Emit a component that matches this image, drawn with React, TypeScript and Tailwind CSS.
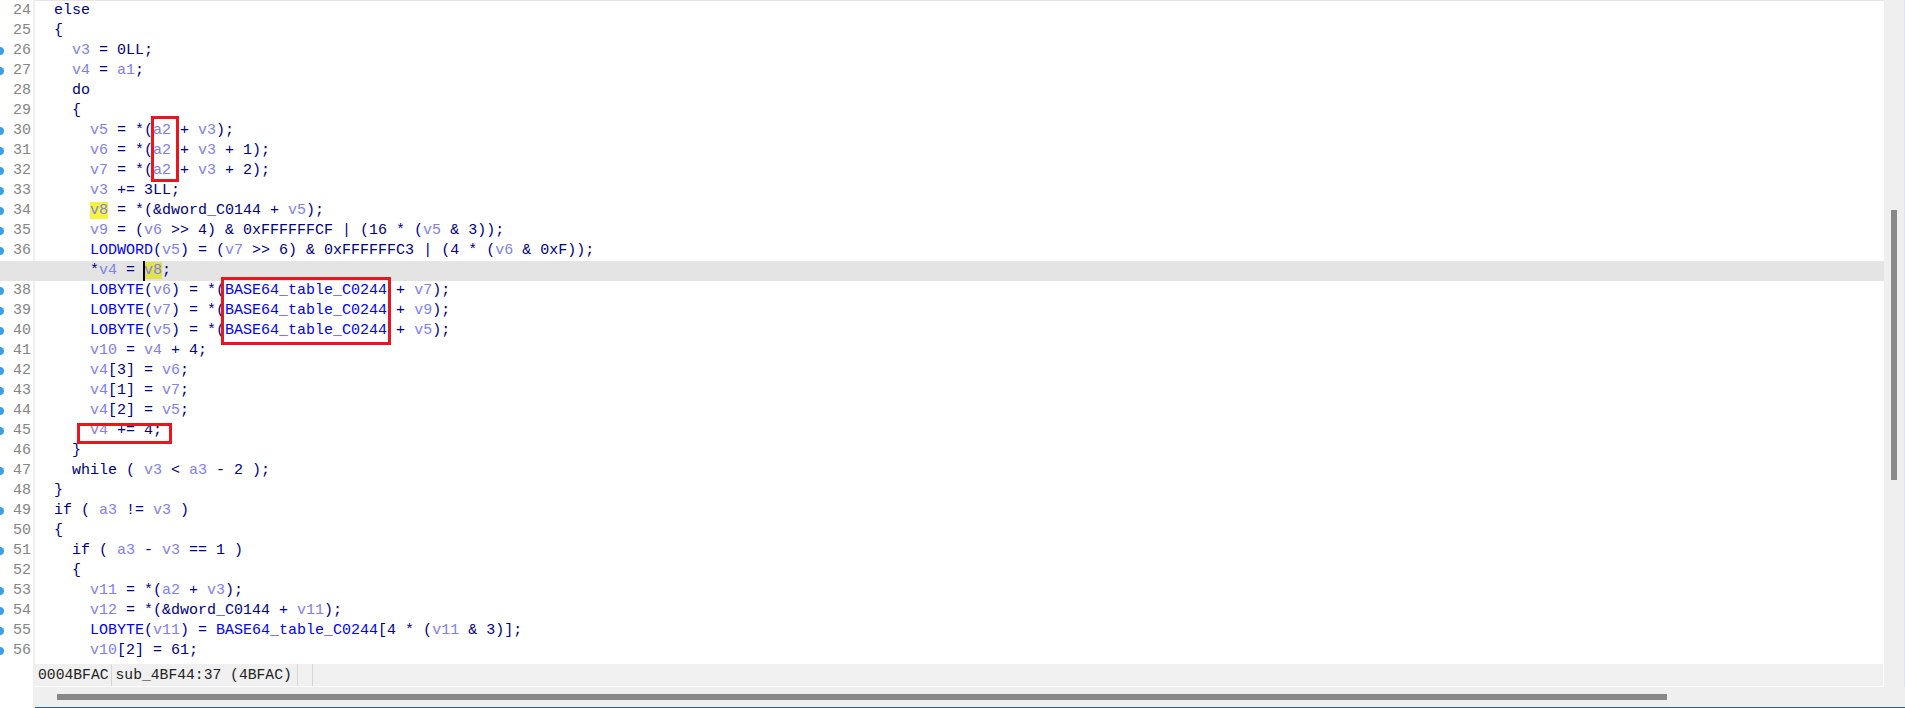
import React from "react";

const CODE: string[] = [
  "  else",
  "  {",
  "    v3 = 0LL;",
  "    v4 = a1;",
  "    do",
  "    {",
  "      v5 = *(a2 + v3);",
  "      v6 = *(a2 + v3 + 1);",
  "      v7 = *(a2 + v3 + 2);",
  "      v3 += 3LL;",
  "      v8 = *(&dword_C0144 + v5);",
  "      v9 = (v6 >> 4) & 0xFFFFFFCF | (16 * (v5 & 3));",
  "      LODWORD(v5) = (v7 >> 6) & 0xFFFFFFC3 | (4 * (v6 & 0xF));",
  "      *v4 = v8;",
  "      LOBYTE(v6) = *(BASE64_table_C0244 + v7);",
  "      LOBYTE(v7) = *(BASE64_table_C0244 + v9);",
  "      LOBYTE(v5) = *(BASE64_table_C0244 + v5);",
  "      v10 = v4 + 4;",
  "      v4[3] = v6;",
  "      v4[1] = v7;",
  "      v4[2] = v5;",
  "      v4 += 4;",
  "    }",
  "    while ( v3 < a3 - 2 );",
  "  }",
  "  if ( a3 != v3 )",
  "  {",
  "    if ( a3 - v3 == 1 )",
  "    {",
  "      v11 = *(a2 + v3);",
  "      v12 = *(&dword_C0144 + v11);",
  "      LOBYTE(v11) = BASE64_table_C0244[4 * (v11 & 3)];",
  "      v10[2] = 61;",
];

const FIRST = 24;
const CURRENT = 37;
const NO_DOT = [24, 25, 28, 29, 46, 48, 50, 52];
const BLUE_NAMES = ["LOBYTE", "LODWORD", "BASE64_table_C0244"];

function Token({ text, line }: { text: string; line: number }) {
  if (/^[va]\d+$/.test(text)) {
    const hl = text === "v8" && (line === 34 || line === 37);
    if (hl) {
      return (
        <span
          className={
            line === 37
              ? "relative bg-[#e2e24e] text-[#8080f0]"
              : "bg-[#f4f43c] text-[#8080f0]"
          }
        >
          {line === 37 && (
            <span className="absolute left-[-1px] top-[-1px] h-[20px] w-[2px] bg-black" />
          )}
          {text}
        </span>
      );
    }
    return <span className="text-[#8080f0]">{text}</span>;
  }
  if (BLUE_NAMES.includes(text)) {
    return <span className="text-[#0000ff]">{text}</span>;
  }
  return <span>{text}</span>;
}

function CodeLine({ src, line }: { src: string; line: number }) {
  const parts = src.split(/([A-Za-z_][A-Za-z0-9_]*)/);
  return (
    <div
      className={
        "h-[20px] whitespace-pre pl-[36px] leading-[20px] " +
        (line === CURRENT ? "bg-[#e4e4e4]" : "")
      }
    >
      {parts.map((p, i) =>
        i % 2 === 1 ? <Token key={i} text={p} line={line} /> : <span key={i}>{p}</span>
      )}
    </div>
  );
}

export default function App() {
  return (
    <div className="flex h-[708px] w-[1905px] overflow-hidden bg-white font-['Liberation_Mono',monospace] text-[15px] text-[#000080]">
      {/* line number gutter */}
      <div className="flex w-[35px] shrink-0 flex-col border-r-[2px] border-[#efefef] pt-[1px]">
        {CODE.map((_, i) => {
          const n = FIRST + i;
          return (
            <div key={n} className="relative h-[20px] pr-[2px] text-right leading-[20px] text-[#858585]">
              {!NO_DOT.includes(n) && (
                <span className="absolute left-[-4px] top-[6px] h-[8px] w-[8px] rounded-full bg-[#3aa0e8]" />
              )}
              {n}
            </div>
          );
        })}
      </div>

      <div className="flex min-w-0 flex-1 flex-col border-b border-[#1b62b8]">
        <div className="flex min-h-0 flex-1">
          <div className="flex min-w-0 flex-1 flex-col">
            {/* pseudocode view */}
            <div className="relative min-h-0 flex-1 border-t border-[#e6e6e6]">
              <div className="-ml-[35px]">
                {CODE.map((src, i) => (
                  <CodeLine key={i} src={src} line={FIRST + i} />
                ))}
              </div>
              <div className="pointer-events-none absolute left-[116px] top-[115px] h-[66px] w-[28px] border-[3px] border-[#e8161e]" />
              <div className="pointer-events-none absolute left-[186px] top-[276px] h-[68px] w-[170px] border-[3px] border-[#e8161e]" />
              <div className="pointer-events-none absolute left-[42px] top-[422px] h-[21px] w-[95px] border-[3px] border-[#e8161e]" />
            </div>

            {/* status bar */}
            <div className="flex h-[23px] shrink-0 items-center border-b border-r border-white bg-[#f0f0f0] font-['Liberation_Mono',monospace] text-[14.7px] leading-[22px] text-[#222]">
              <span className="border-r border-[#d6d6d6] pl-[3px] pr-[2px]">0004BFAC</span>
              <span className="whitespace-pre border-r border-[#d6d6d6] pl-[4px] pr-[5px]">sub_4BF44:37 (4BFAC)</span>
              <span className="h-[22px] w-[15px] border-r border-[#d6d6d6]" />
            </div>
          </div>

          {/* vertical scrollbar */}
          <div className="w-[21px] shrink-0 border-r border-[#dce6f2] bg-[#efefef] pl-[7px] pt-[210px]">
            <div className="h-[270px] w-[6px] bg-[#888888]" />
          </div>
        </div>

        {/* horizontal scrollbar */}
        <div className="flex h-[20px] shrink-0 items-center bg-[#efefef] pl-[22px]">
          <div className="h-[6px] w-[1610px] bg-[#888888]" />
        </div>
      </div>
    </div>
  );
}
